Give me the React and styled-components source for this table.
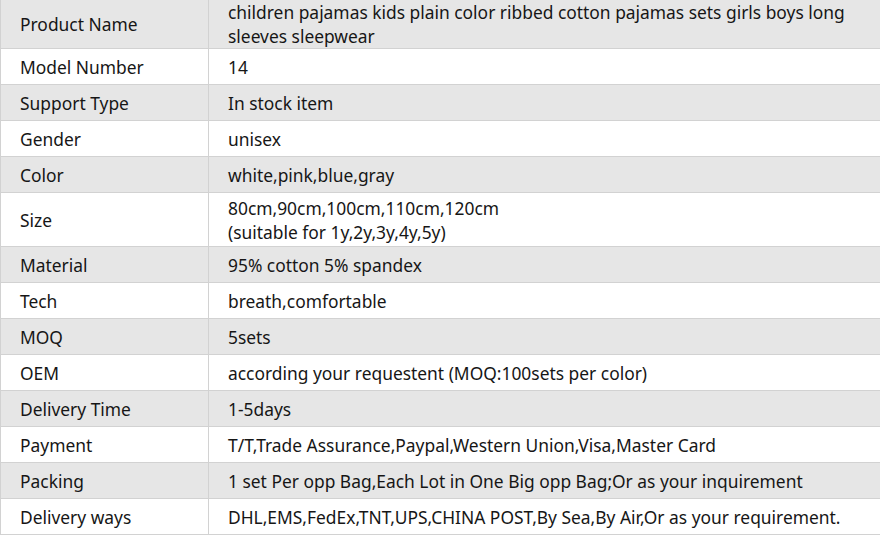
import styled, { createGlobalStyle } from 'styled-components';

const GlobalStyle = createGlobalStyle`
  body {
    margin: 0;
    background: #fff;
    overflow: hidden;
    font-family: 'Noto Sans', 'Open Sans', sans-serif;
  }
`;

const Table = styled.div`
  display: grid;
  grid-template-columns: 208px 700px;
  width: 908px;
  border-left: 1px solid #d2d2d2;
`;

const Cell = styled.div`
  display: flex;
  align-items: center;
  min-height: 36px;
  padding: ${p => (p.$first ? '0 19px' : '3px 19px 2px')};
  box-sizing: border-box;
  background: ${p => (p.$shade ? '#e6e6e6' : '#fff')};
  border-bottom: 1px solid #d2d2d2;
  border-right: 1px solid #d2d2d2;
  color: #161616;
  font-size: 17.4px;
  line-height: 24px;
  white-space: pre-line;
`;

const rows = [
  ['Product Name', 'children pajamas kids plain color ribbed cotton pajamas sets girls boys long\nsleeves sleepwear'],
  ['Model Number', '14'],
  ['Support Type', 'In stock item'],
  ['Gender', 'unisex'],
  ['Color', 'white,pink,blue,gray'],
  ['Size', '80cm,90cm,100cm,110cm,120cm\n(suitable for 1y,2y,3y,4y,5y)'],
  ['Material', '95% cotton 5% spandex'],
  ['Tech', 'breath,comfortable'],
  ['MOQ', '5sets'],
  ['OEM', 'according your requestent (MOQ:100sets per color)'],
  ['Delivery Time', '1-5days'],
  ['Payment', 'T/T,Trade Assurance,Paypal,Western Union,Visa,Master Card'],
  ['Packing', '1 set Per opp Bag,Each Lot in One Big opp Bag;Or as your inquirement'],
  ['Delivery ways', 'DHL,EMS,FedEx,TNT,UPS,CHINA POST,By Sea,By Air,Or as your requirement.'],
];

export default function App() {
  return (
    <>
      <GlobalStyle />
      <Table>
        {rows.map(([label, value], i) => [
          <Cell key={label + 'l'} $shade={i % 2 === 0} $first={i === 0}>{label}</Cell>,
          <Cell key={label + 'v'} $shade={i % 2 === 0} $first={i === 0}>{value}</Cell>,
        ])}
      </Table>
    </>
  );
}
